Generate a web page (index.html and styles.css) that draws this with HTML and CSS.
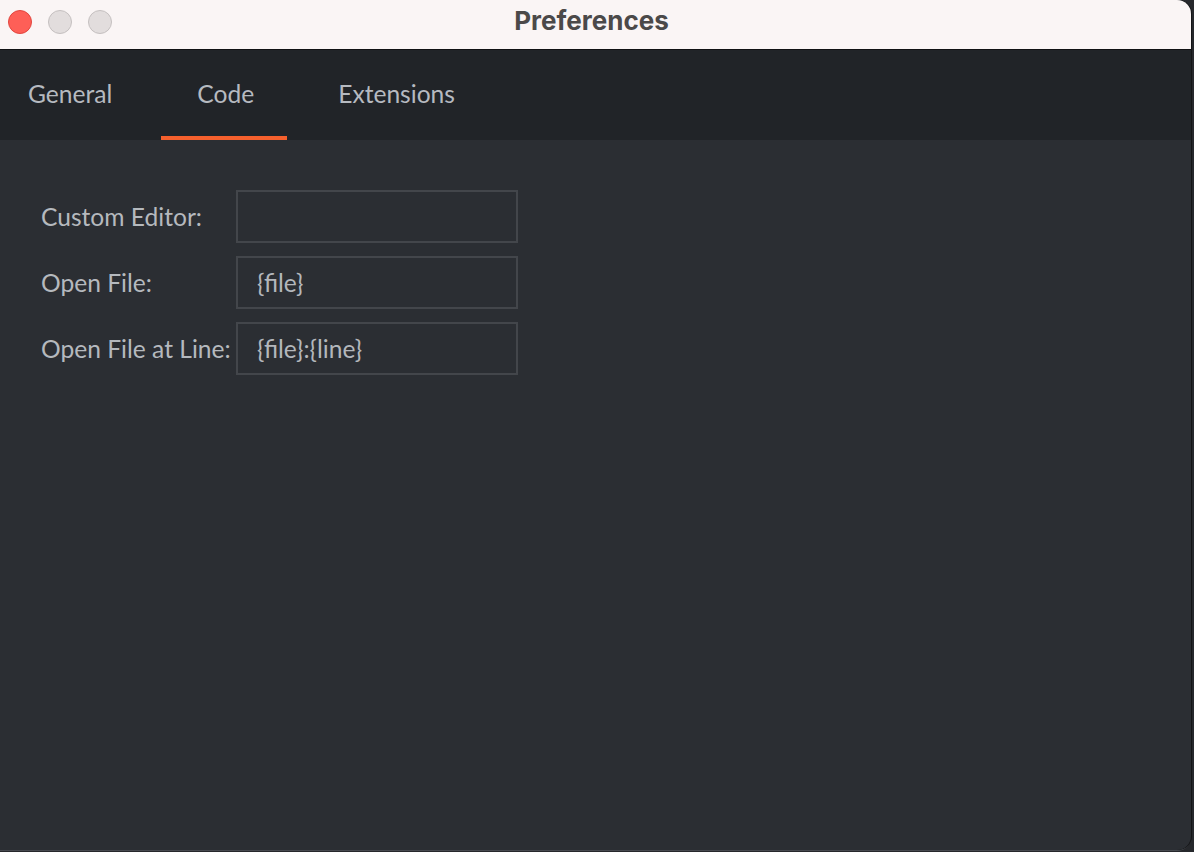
FILE: index.html
```html
<!DOCTYPE html>
<html>
<head>
<meta charset="utf-8">
<title>Preferences</title>
<link rel="stylesheet" href="styles.css">
</head>
<body>
<div class="window">
  <div class="titlebar">
    <div class="lights">
      <span class="light close"></span>
      <span class="light"></span>
      <span class="light"></span>
    </div>
    <div class="title">Preferences</div>
  </div>
  <div class="tabbar">
    <div class="tab">General</div>
    <div class="tab active">Code</div>
    <div class="tab tab-last">Extensions</div>
  </div>
  <div class="content">
    <div class="form">
      <label class="label">Custom Editor:</label>
      <div class="field"></div>
      <label class="label">Open File:</label>
      <div class="field">{file}</div>
      <label class="label">Open File at Line:</label>
      <div class="field">{file}:{line}</div>
    </div>
  </div>
</div>
</body>
</html>
```

FILE: styles.css
```css
* { box-sizing: border-box; }
html, body {
  margin: 0;
  padding: 0;
  background: #26282c;
  height: 852px;
  overflow: hidden;
}
.window {
  margin-left: -8px;
  width: 1199px;
  height: 850px;
  display: flex;
  flex-direction: column;
  border-radius: 0 14px 14px 0;
  overflow: hidden;
  background: #2b2e33;
  box-shadow: 1px 0 0 #141517, 0 1px 0 #46494e;
  font-family: Lato, "Noto Sans", sans-serif;
}
.titlebar {
  position: relative;
  height: 50px;
  flex: none;
  background: #faf5f5;
  border-bottom: 1px solid #101113;
  display: flex;
  align-items: center;
}
.lights {
  display: flex;
  gap: 16px;
  padding-left: 16px;
  margin-top: -6px;
}
.light {
  width: 24px;
  height: 24px;
  border-radius: 50%;
  background: #e2dddd;
  border: 1px solid #c5c0c0;
}
.light.close {
  background: #fe5f57;
  border-color: #e2463f;
}
.title {
  position: absolute;
  left: 0;
  right: 0;
  top: 5px;
  text-align: center;
  font-family: Inter, "Liberation Sans", sans-serif;
  font-weight: 700;
  font-size: 26px;
  line-height: 32px;
  color: #4b4949;
}
.tabbar {
  height: 90px;
  flex: none;
  background: #212428;
  display: flex;
  gap: 13px;
}
.tab {
  padding: 0 36px;
  display: flex;
  align-items: center;
  font-size: 24.6px;
  color: #b6bac0;
  border-bottom: 4px solid transparent;
}
.tab.active {
  border-bottom-color: #f5602d;
  padding: 0 33px 0 36px;
}
.tab.tab-last {
  padding-left: 38px;
}
.content {
  flex: 1;
  padding: 50px 0 0 49px;
}
.form {
  display: grid;
  grid-template-columns: 195px 282px;
  row-gap: 13px;
  align-items: center;
}
.label {
  font-size: 24.6px;
  color: #b5b9be;
  white-space: nowrap;
}
.field {
  height: 53px;
  border: 2px solid #43464b;
  padding-left: 19px;
  display: flex;
  align-items: center;
  font-size: 24.6px;
  color: #b3b7bc;
}
```
